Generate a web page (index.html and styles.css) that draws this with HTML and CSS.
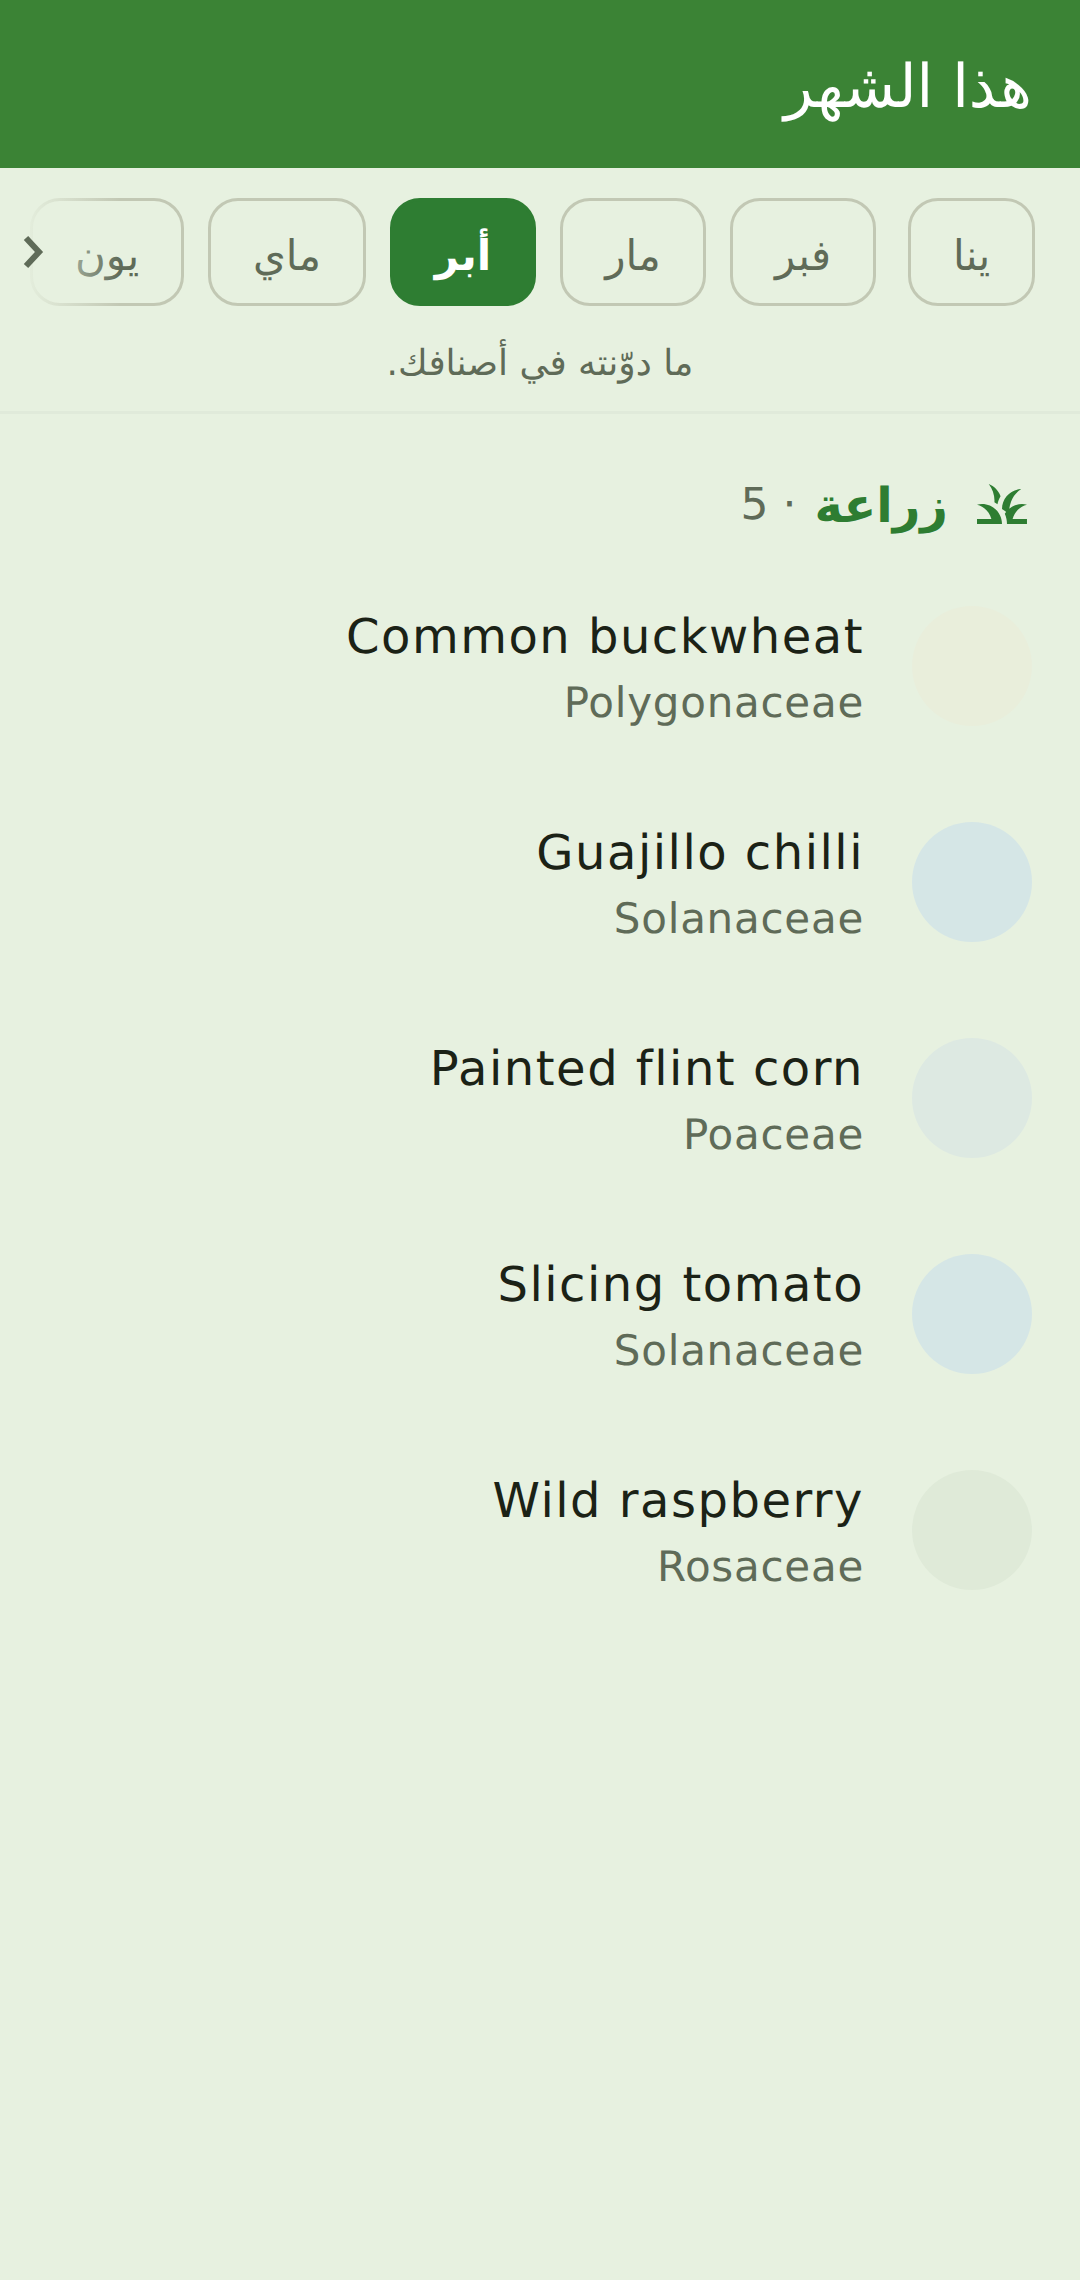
FILE: index.html
```html
<!DOCTYPE html>
<html lang="ar" dir="rtl">
<head>
    <meta charset="UTF-8">
    <meta name="viewport" content="width=device-width, initial-scale=1.0">
    <title>هذا الشهر</title>
    <link rel="stylesheet" href="styles.css">
</head>
<body>
    <header class="app-bar">
        <h1 class="app-title">هذا الشهر</h1>
    </header>

    <!-- Months -->
    <div class="month-strip">
        <div class="chips">
            <span class="chip chip-jan">ينا</span>
            <span class="chip">فبر</span>
            <span class="chip">مار</span>
            <span class="chip chip-on">أبر</span>
            <span class="chip chip-may">ماي</span>
            <span class="chip chip-jun">يون</span>
        </div>
        <div class="fade"></div>
        <svg class="chevron" viewBox="0 0 24 36" width="24" height="36">
            <path d="M4 4 L17 18 L4 32" fill="none" stroke="#5f6b58" stroke-width="6"/>
        </svg>
    </div>
    <p class="hint">ما دوّنته في أصنافك.</p>

    <main class="content">
        <div class="section-head">
            <svg class="section-icon" viewBox="0 0 24 24" width="60" height="60">
                <path fill="#2e7d32" d="M12,20H2v-2h5.75C7.02,15.19,4.81,12.99,2,12.26C2.64,12.1,3.31,12,4,12C8.42,12,12,15.58,12,20z M22,12.26C21.36,12.1,20.69,12,20,12c-2.93,0-5.48,1.58-6.88,3.93c0.29,0.66,0.53,1.35,0.67,2.07c0.13,0.65,0.2,1.32,0.2,2h2h6v-2h-5.75C16.98,15.19,19.19,12.99,22,12.26z M15.64,11.02c0.78-2.09,2.23-3.84,4.09-5C15.44,6.16,12,9.67,12,14c0,0.01,0,0.02,0,0.02c0.95,0.54,1.79,1.22,2.51,2.02C14.83,14.27,15.1,12.46,15.64,11.02z M11.42,8.85C10.58,6.66,8.88,4.89,6.7,4C8.14,5.86,9,8.18,9,10.71c0,0.21-0.03,0.41-0.04,0.61c0.43,0.24,0.83,0.52,1.22,0.82C10.39,10.96,10.81,9.85,11.42,8.85z"/>
            </svg>
            <span class="section-name">زراعة</span>
            <span class="section-count">· 5</span>
        </div>

        <div class="row">
            <div class="dot dot-buckwheat"></div>
            <div class="row-text">
                <div class="name">Common buckwheat</div>
                <div class="family">Polygonaceae</div>
            </div>
        </div>
        <div class="row">
            <div class="dot dot-chilli"></div>
            <div class="row-text">
                <div class="name">Guajillo chilli</div>
                <div class="family">Solanaceae</div>
            </div>
        </div>
        <div class="row">
            <div class="dot dot-corn"></div>
            <div class="row-text">
                <div class="name">Painted flint corn</div>
                <div class="family">Poaceae</div>
            </div>
        </div>
        <div class="row">
            <div class="dot dot-chilli"></div>
            <div class="row-text">
                <div class="name">Slicing tomato</div>
                <div class="family">Solanaceae</div>
            </div>
        </div>
        <div class="row">
            <div class="dot dot-raspberry"></div>
            <div class="row-text">
                <div class="name">Wild raspberry</div>
                <div class="family">Rosaceae</div>
            </div>
        </div>
    </main>
</body>
</html>
```

FILE: styles.css
```css
html, body {
    height: 100%;
}

body {
    margin: 0;
    background-color: #e7f1e0;
    font-family: "DejaVu Sans", sans-serif;
    color: #1b2216;
    text-rendering: geometricPrecision;
}

.app-bar {
    height: 168px;
    background-color: #3b8335;
    display: flex;
    align-items: center;
    padding: 5px 48px 0;
    box-sizing: border-box;
}

.app-title {
    margin: 0;
    color: #fff;
    font-size: 60px;
    font-weight: normal;
}

.month-strip {
    position: relative;
    height: 138px;
    padding-top: 30px;
    box-sizing: border-box;
    overflow: hidden;
}

.chips {
    display: flex;
    gap: 24px;
    padding-right: 45px;
}

.chip {
    flex: none;
    width: 146px;
    height: 108px;
    box-sizing: border-box;
    padding-top: 6px;
    border: 3px solid #c2c8b4;
    border-radius: 30px;
    display: flex;
    align-items: center;
    justify-content: center;
    font-size: 42px;
    color: #5f6b58;
}

.chip-jan {
    width: 127px;
    margin-left: 8px;
}

.chip-may {
    width: 158px;
}

.chip-jun {
    width: 154px;
}

.chip-on {
    background-color: #2e7d32;
    border-color: #2e7d32;
    color: #fff;
    font-weight: bold;
}

.fade {
    position: absolute;
    left: 0;
    top: 0;
    width: 120px;
    height: 100%;
    background: linear-gradient(to right, #e7f1e0 20px, rgba(231, 241, 224, 0));
}

.chevron {
    position: absolute;
    left: 22px;
    top: 66px;
}

.hint {
    margin: 0;
    height: 108px;
    box-sizing: border-box;
    padding-top: 33px;
    border-bottom: 3px solid #e0eada;
    text-align: center;
    font-size: 36px;
    line-height: 50px;
    color: #5f6b58;
}

.content {
    padding: 54px 48px 0;
}

.section-head {
    display: flex;
    align-items: center;
    gap: 24px;
    height: 72px;
    margin-bottom: 66px;
}

.section-icon {
    flex: none;
}

.section-name {
    font-size: 48px;
    font-weight: bold;
    color: #2e7d32;
    margin-left: -6px;
    padding-top: 4px;
}

.section-count {
    font-size: 44px;
    color: #5f6b58;
}

.row {
    display: flex;
    align-items: center;
    gap: 48px;
    height: 120px;
    margin-bottom: 96px;
}

.row-text {
    padding-top: 2px;
}

.dot {
    flex: none;
    width: 120px;
    height: 120px;
    border-radius: 50%;
}

.dot-buckwheat {
    background-color: #e9eedb;
}

.dot-chilli {
    background-color: #d5e6e6;
}

.dot-corn {
    background-color: #dde9e2;
}

.dot-raspberry {
    background-color: #dfead8;
}

.name {
    font-size: 48px;
    line-height: 72px;
    letter-spacing: 1.5px;
    color: #1b2216;
}

.family {
    font-size: 42px;
    line-height: 60px;
    letter-spacing: 0.75px;
    color: #5f6b58;
}
```
